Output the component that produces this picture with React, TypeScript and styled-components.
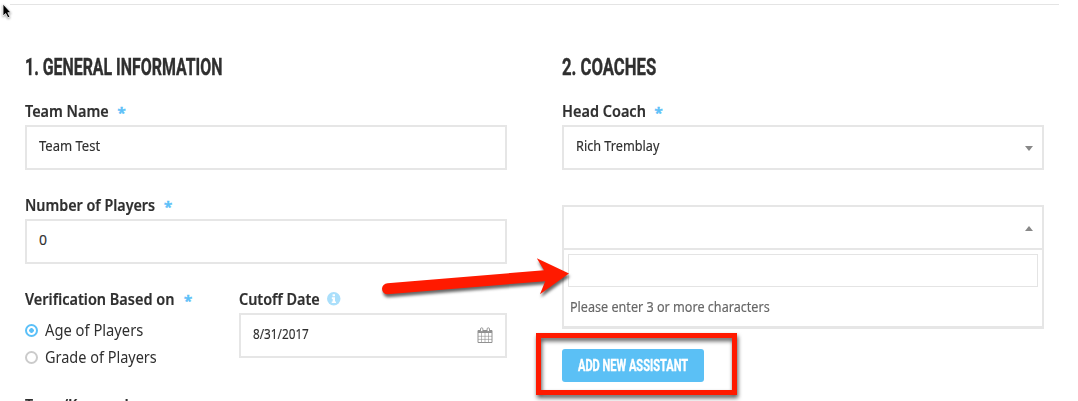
import React from "react";
import styled, { createGlobalStyle } from "styled-components";

const Global = createGlobalStyle`
  * { box-sizing: border-box; }
  html, body { margin: 0; background: #fff; overflow: hidden; }
  body { font-family: "Noto Sans", "Open Sans", sans-serif; color: #2f2f2f; }
`;
const Page = styled.main`
  position: relative;
  width: 1078px;
  height: 401px;
  overflow: hidden;
  padding: 4px 19px 0 10px;
`;
const Rule = styled.hr`
  margin: 0;
  border: 0;
  height: 1px;
  background: #e4e4e4;
`;
const Columns = styled.div`
  display: grid;
  grid-template-columns: 482px 482px;
  column-gap: 54.5px;
  padding: 46px 0 0 15px;
`;
const Column = styled.section`
  display: flex;
  flex-direction: column;
`;
const Fit = styled.span<{ $x: number }>`
  display: inline-block;
  white-space: nowrap;
  transform: scaleX(${(p) => p.$x});
  transform-origin: 0 50%;
`;
const Heading = styled.h2`
  margin: 0;
  height: 49px;
  font: 700 24px/32px Roboto, sans-serif;
  -webkit-text-stroke: 0.4px #2f2f2f;
`;
const Label = styled.div<{ $w: number }>`
  display: flex;
  height: 25px;
  font-size: 16px;
  line-height: 22px;
  font-weight: 600;
  -webkit-text-stroke: 0.2px #2f2f2f;
  & > span:first-child { width: ${(p) => p.$w}px; white-space: nowrap; }
`;
const Star = styled.span`
  color: #5bc0f8;
  font-size: 15px;
  line-height: 24px;
  -webkit-text-stroke: 0.5px #5bc0f8;
`;
const Field = styled.div<{ $gap?: number }>`
  display: flex;
  justify-content: space-between;
  height: 45px;
  margin-bottom: ${(p) => p.$gap ?? 0}px;
  padding: 0 12px;
  border: 2px solid #e6e6e6;
  font-size: 14px;
  line-height: 38px;
  -webkit-text-stroke: 0.15px #2f2f2f;
`;
const Split = styled.div`
  display: grid;
  grid-template-columns: 214px 268px;
  height: 106px;
`;
const Options = styled.div`
  padding-top: 4px;
`;
const Option = styled.div`
  display: flex;
  align-items: center;
  height: 27px;
  gap: 7px;
  font-size: 16px;
  line-height: 27px;
`;
const Radio = styled.i<{ $on?: boolean }>`
  width: 13px;
  height: 13px;
  border: 2px solid ${(p) => (p.$on ? "#5bc0f8" : "#cbcbcb")};
  border-radius: 50%;
  background: ${(p) => (p.$on ? "radial-gradient(#5bc0f8 0 2px, #fff 2.6px)" : "#fff")};
`;
const Info = styled.svg`
  margin-top: 4px;
`;
const CalendarIcon = styled.svg`
  margin-top: 12px;
`;
const Caret = styled.i<{ $up?: boolean }>`
  align-self: center;
  margin: 1px -3px 0 0;
  border: solid transparent;
  border-width: 0 4px;
  ${(p) => (p.$up ? "border-bottom: 5px solid #888;" : "border-top: 5px solid #888;")}
`;
const Drop = styled.div`
  height: 79px;
  padding: 4px 4px 0;
  border: solid #e6e6e6;
  border-width: 0 2px 3px;
`;
const Search = styled.div`
  height: 33px;
  border: 1px solid #e4e4e4;
`;
const Hint = styled.p`
  margin: 0;
  padding-left: 2px;
  color: #666;
  font-size: 14px;
  line-height: 40px;
  -webkit-text-stroke: 0.15px #666;
`;
const AddButton = styled.button`
  width: 142px;
  height: 33px;
  margin-top: 20px;
  padding: 0 0 0 16px;
  border: 0;
  border-radius: 3px;
  background: #5bc0f5;
  color: #fff;
  text-align: left;
  font: 700 16px/33px Roboto, sans-serif;
  -webkit-text-stroke: 0.4px #fff;
`;
const Highlight = styled.div`
  position: absolute;
  left: 536px;
  top: 333px;
  width: 201px;
  height: 62px;
  border: 5px solid #ff1a00;
  filter: drop-shadow(1px 3px 2px rgba(0, 0, 0, 0.65));
`;
const Overlay = styled.svg`
  position: absolute;
  left: 0;
  top: 0;
  pointer-events: none;
`;

function Calendar() {
  return (
    <CalendarIcon width="16" height="17" viewBox="0 0 16 17" fill="none" stroke="#929292">
      <path d="M1 3.500h14V15.500H1z" />
      <path d="M1 3h14v3H1z" fill="#929292" stroke="none" />
      <path d="M4.500 6v9M8 6v9M11.500 6v9M1 9.300h14M1 12.400h14" strokeWidth=".9" opacity=".7" />
      <path d="M3.500 4.500V2a1.200 1.200 0 0 1 2.400 0v2.500zM10.100 4.500V2a1.200 1.200 0 0 1 2.400 0v2.500z" fill="#fff" strokeWidth=".9" />
    </CalendarIcon>
  );
}

export default function App() {
  return (
    <Page>
      <Global />
      <Rule />
      <Columns>
        <Column>
          <Heading><Fit $x={0.663}>1. GENERAL INFORMATION</Fit></Heading>
          <Label $w={92.5}><span><Fit $x={0.9}>Team Name</Fit></span><Star>*</Star></Label>
          <Field $gap={24}><Fit $x={0.93}>Team Test</Fit></Field>
          <Label $w={139}><span><Fit $x={0.895}>Number of Players</Fit></span><Star>*</Star></Label>
          <Field $gap={24}><Fit $x={1}>0</Fit></Field>
          <Split>
            <div>
              <Label $w={159}><span><Fit $x={0.905}>Verification Based on</Fit></span><Star>*</Star></Label>
              <Options>
                <Option><Radio $on /><Fit $x={0.92}>Age of Players</Fit></Option>
                <Option><Radio /><Fit $x={0.905}>Grade of Players</Fit></Option>
              </Options>
            </div>
            <div>
              <Label $w={88}>
                <span><Fit $x={0.9}>Cutoff Date</Fit></span>
                <Info width="13.500" height="13.500" viewBox="0 0 14 14">
                  <circle cx="7" cy="7" r="7" fill="#aadffb" />
                  <path d="M5.800 2.300h2.500v2H5.800zM5 5.500h3.300v4.300h1V11.500H4.900V9.800h1V7.200H5z" fill="#fff" />
                </Info>
              </Label>
              <Field><Fit $x={0.84}>8/31/2017</Fit><Calendar /></Field>
            </div>
          </Split>
          <Label $w={110}><span><Fit $x={0.89}>Team/Keyword</Fit></span></Label>
        </Column>
        <Column>
          <Heading><Fit $x={0.695}>2. COACHES</Fit></Heading>
          <Label $w={93}><span><Fit $x={0.905}>Head Coach</Fit></span><Star>*</Star></Label>
          <Field $gap={35}><Fit $x={0.905}>Rich Tremblay</Fit><Caret /></Field>
          <Field><span /><Caret $up /></Field>
          <Drop>
            <Search />
            <Hint><Fit $x={0.9}>Please enter 3 or more characters</Fit></Hint>
          </Drop>
          <AddButton><Fit $x={0.69}>ADD NEW ASSISTANT</Fit></AddButton>
        </Column>
      </Columns>
      <Highlight />
      <Overlay width="1078" height="401">
        <path
          d="M387.500 283.300 544 270.200 536.800 258.300 569 273.500 540 294.300 545.200 281.200 387.500 294.300A5.500 5.500 0 0 1 387.500 283.300Z"
          fill="#ff1a00"
          style={{ filter: "drop-shadow(1px 3px 1.500px rgba(0,0,0,.6))" }}
        />
        <path d="M3 4v12l2.700-2.500 2.200 4.300 2-1-2.100-4.100H11z" fill="#000" stroke="#fff" strokeWidth=".8" style={{ filter: "drop-shadow(0 1px 1px rgba(0,0,0,.4))" }} />
      </Overlay>
    </Page>
  );
}
